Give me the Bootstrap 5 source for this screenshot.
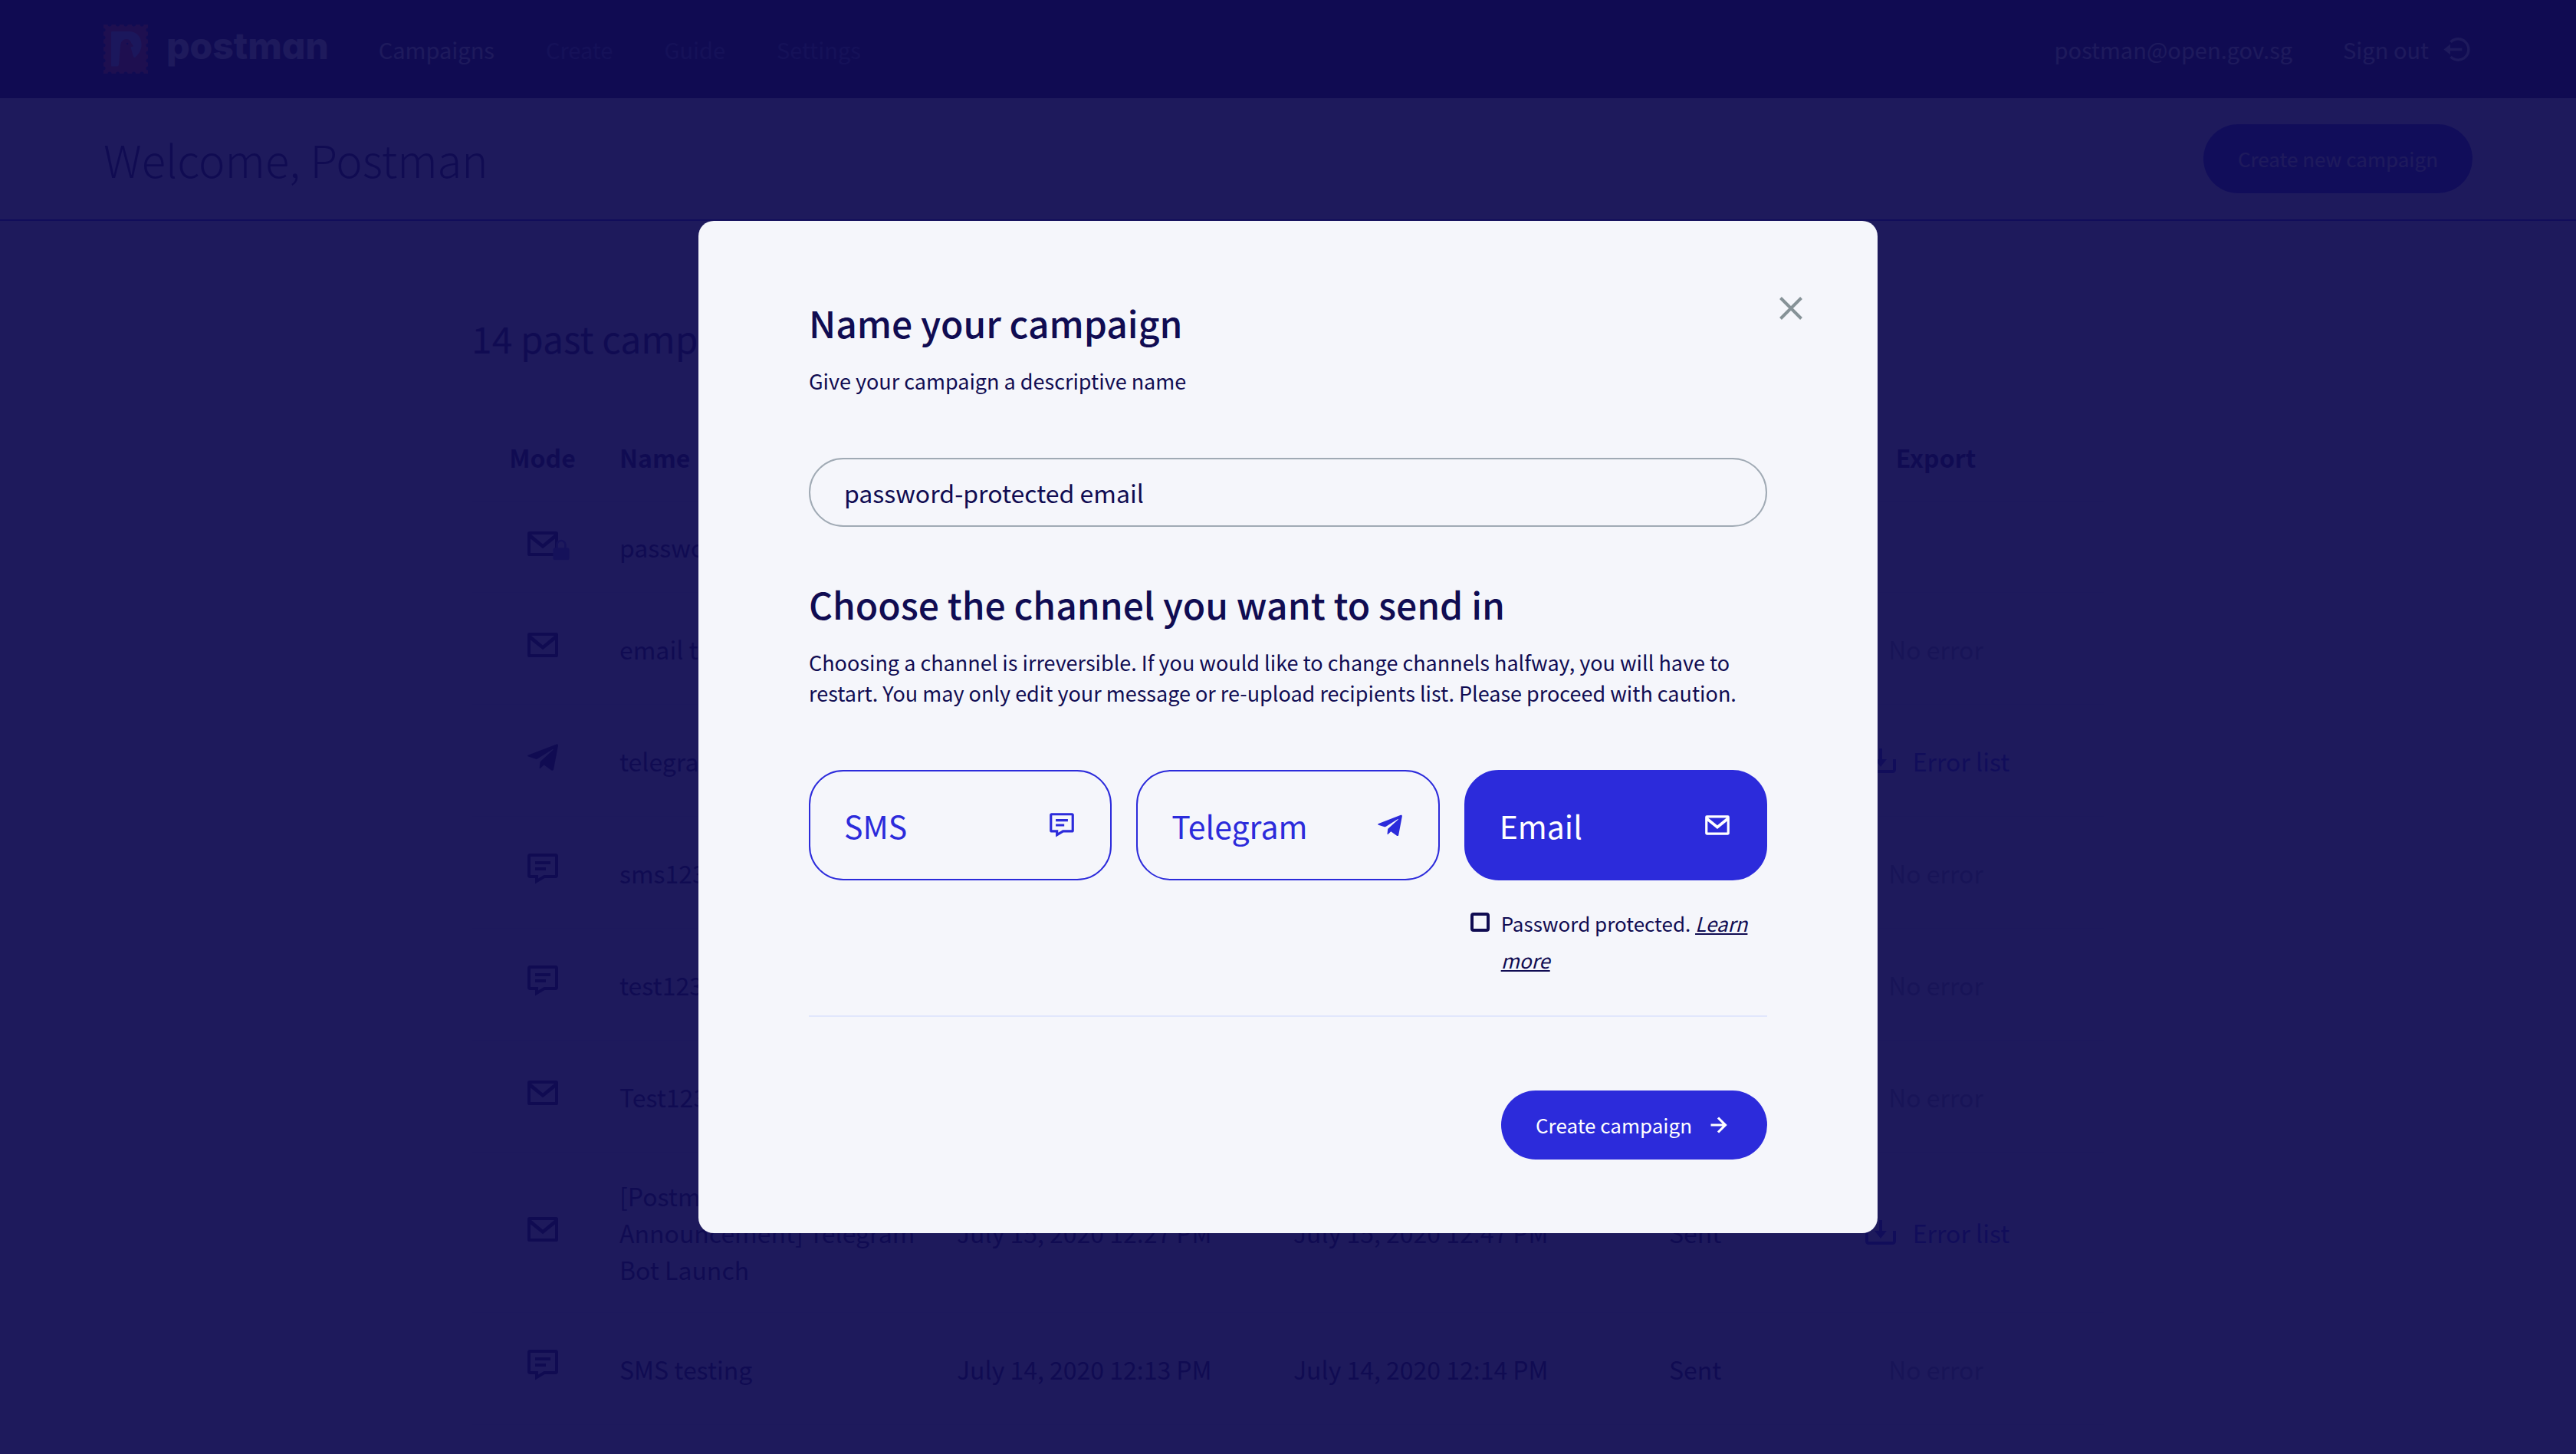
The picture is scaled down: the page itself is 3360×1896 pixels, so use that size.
<!DOCTYPE html>
<html lang="en">
<head>
<meta charset="utf-8">
<meta name="viewport" content="width=device-width, initial-scale=1">
<title>Postman - Campaigns</title>
<link href="https://cdn.jsdelivr.net/npm/bootstrap@5.3.0/dist/css/bootstrap.min.css" rel="stylesheet">
<style>
:root{--ink:#100c52;--brand:#2c2bdb;--paper:#f5f6fb;--rule:#e1e7fc}
body{font-family:"Noto Sans CJK SC","Noto Sans",sans-serif;font-size:32px;line-height:48px;color:var(--ink);background:var(--paper)}
svg{fill:currentColor;flex:none}
.gutter{padding-left:135px;padding-right:135px}
/* top bar */
.topbar{height:128px;background:var(--ink);color:var(--paper);font-size:29px}
.topbar a,.topbar button{color:inherit;text-decoration:none}
.topbar .nav{gap:67px;margin-left:65px}
.topbar .nav .muted-link{color:#6a62b8}
.wordmark{font:800 48px/56px Inter,sans-serif;font-feature-settings:"cv11";padding-bottom:8px;margin-left:24px}
.signout{gap:16px;margin-left:66px;padding:0;border:0;background:none}
/* page header */
.page-head{padding-top:34px;padding-bottom:34px;border-bottom:2px solid var(--brand)}
.page-head h1{font-size:58px;font-weight:300;line-height:80px;margin:0}
.btn-pill{height:90px;border-radius:45px;background:var(--brand);color:#fff;font-size:26px;line-height:40px;padding:0 45px;border:0}
/* campaigns table */
.listing{max-width:2130px;padding-top:117px}
.listing h2{font-size:48px;font-weight:400;line-height:70px;margin:0 0 64px}
.campaigns{table-layout:fixed;margin:0;color:var(--ink);--bs-table-bg:transparent;--bs-table-color:var(--ink)}
.campaigns th{padding:33px 8px;font-weight:700;border-bottom:1px solid var(--rule)}
.campaigns td{padding:32px 8px;vertical-align:middle;border-bottom:1px solid var(--rule)}
.campaigns .c-mode{width:185px}
.campaigns .c-name,.campaigns .c-export{width:440px}
.campaigns .c-date{width:439px}
.campaigns .c-sent{width:490px}
.mode-icon{height:54px;padding-bottom:9px}
.export-cell{height:81px}
.export-cell a{gap:18px;color:var(--brand);text-decoration:none}
.no-error{color:#9299a8}
.lock{left:32px;top:16px;color:#6b67d6}
/* dialog */
.modal-backdrop{--bs-backdrop-bg:#100c52;--bs-backdrop-opacity:.94}
.modal-dialog{max-width:1538px}
.modal-content{background:var(--paper);color:var(--ink);border:0;border-radius:20px;padding:97px 144px 96px}
.modal-content h2,.modal-content .h2{font-size:48px;font-weight:500;line-height:70px;margin:0 0 22px;display:block}
.hint{font-size:27px;line-height:40px;margin:0 0 80px}
.name-box{height:90px;border:2px solid #a0aab4;border-radius:45px;background:transparent;color:var(--ink);font-size:32px;padding:0 44px;margin-bottom:65px}
.channels{display:grid;grid-template-columns:repeat(3,minmax(0,1fr));gap:32px}
.channel{height:144px;border:2px solid var(--brand);border-radius:45px;color:var(--brand);font-size:41px;line-height:60px;padding:0 44px}
.channel.active{background:var(--brand);color:#fff}
.protect{grid-column:3;gap:15px;padding-left:8px;font-size:26px;line-height:48px}
.protect input{appearance:none;flex:none;width:25px;height:25px;border:4px solid var(--ink);border-radius:4px;margin:10px 0 0;background:transparent}
.protect a{color:inherit;font-style:italic}
.divider{border:0;border-top:2px solid var(--rule);opacity:1;margin:48px 0 96px}
.close-x{top:90px;right:89px;width:48px;height:48px;padding:0;border:0;background:none;color:#869297;line-height:0}
.create{gap:15px}
</style>
</head>
<body class="vh-100 overflow-hidden">
<svg class="d-none" aria-hidden="true">
  <symbol id="mail" viewBox="0 0 24 24"><path fill-rule="evenodd" d="M3.3 4h17.4A1.3 1.3 0 0 1 22 5.300v13.400a1.300 1.300 0 0 1-1.300 1.300H3.300A1.300 1.300 0 0 1 2 18.700V5.300A1.300 1.300 0 0 1 3.300 4zM4.500 6L12 12.200 19.500 6zM4 8.700V18h16V8.700l-8 6.400z"/></symbol>
  <symbol id="sms" viewBox="0 0 24 24"><path d="M7 7h10v2H7zm0 4h7v2H7z"/><path d="M20.500 2h-17C2.700 2 2 2.700 2 3.500v13c0 .8.700 1.500 1.500 1.500H7v3.767L13.277 18H20.500c.8 0 1.500-.7 1.500-1.500v-13c0-.8-.7-1.500-1.500-1.500zM20 16h-7.277L9 18.233V16H4V4h16v12z"/></symbol>
  <symbol id="telegram" viewBox="0 0 24 24"><path d="M20.900 3.700L2.600 10.800c-.8.300-.8.800-.1 1l5 1.600c.4.100.7 0 1-.2l9.800-6.100c.4-.2.700 0 .4.300l-8.200 7.500c-.2.200-.3.400-.3.600l-.4 3.700c0 .4.400.5.700.2l2.300-2.200 4.800 3.500c.7.400 1.300.2 1.500-.7L22 4.700c.1-.8-.4-1.200-1.100-1z"/></symbol>
  <symbol id="download" viewBox="0 0 24 24"><path d="M12 16l4-5h-3V4h-2v7H8z"/><path d="M20 18H4v-7H2v7c0 1.103.897 2 2 2h16c1.103 0 2-.897 2-2v-7h-2v7z"/></symbol>
  <symbol id="lock" viewBox="0 0 24 24"><path d="M20 12c0-1.103-.897-2-2-2h-1V7c0-2.757-2.243-5-5-5S7 4.243 7 7v3H6c-1.103 0-2 .897-2 2v8c0 1.103.897 2 2 2h12c1.103 0 2-.897 2-2v-8zM9 7c0-1.654 1.346-3 3-3s3 1.346 3 3v3H9V7z"/></symbol>
</svg>

<header class="topbar gutter d-flex align-items-center">
  <a href="#" class="d-flex align-items-center">
    <svg width="58" height="64" viewBox="0 0 58 64">
      <path fill="#f0413f" d="M0 0h58v64H0z"/>
      <path fill="none" stroke="#100c52" stroke-width="5" stroke-linecap="round" d="M8 0h.01M18.500 0h.01M29 0h.01M39.500 0h.01M50 0h.01M8 64h.01M18.500 64h.01M29 64h.01M39.500 64h.01M50 64h.01M0 7h.01M0 17h.01M0 27h.01M0 37h.01M0 47h.01M0 57h.01M58 7h.01M58 17h.01M58 27h.01M58 37h.01M58 47h.01M58 57h.01"/>
      <path fill="#c9cdf5" d="M11.500 9H33c10 0 16.500 7 16.500 17 0 7-3 12-8 16.500-1 .6-1.800.4-2.300-.6-1.600-3.800-2.300-8-3.700-12.600l3.500-.9c-.6-1.800-1.600-3-2.700-4-.7-3.400-3-5.400-6.800-5.400-4.500 0-7 3.500-7.500 9L20 52c-.2 1.600-1.200 2.600-3 2.600h-5.500c-1 0-1.500-.6-1.500-1.600V10.500c0-1 .5-1.500 1.500-1.500z"/>
      <circle cx="31" cy="25" r="1.300" fill="#100c52"/>
    </svg>
    <span class="wordmark">postman</span>
  </a>
  <nav class="nav flex-nowrap">
    <a href="#">Campaigns</a>
    <a href="#" class="muted-link">Create</a>
    <a href="#" class="muted-link">Guide</a>
    <a href="#" class="muted-link">Settings</a>
  </nav>
  <span class="ms-auto">postman@open.gov.sg</span>
  <button type="button" class="signout d-flex align-items-center">Sign out
    <svg width="41" height="41" viewBox="0 0 24 24"><path d="M2 12l5 4v-3h9v-2H7V8z"/><path d="M13.001 2.999a8.938 8.938 0 0 0-6.364 2.637L8.051 7.050c1.322-1.322 3.080-2.051 4.950-2.051s3.628.729 4.950 2.051 2.051 3.080 2.051 4.950-.729 3.628-2.051 4.950-3.080 2.051-4.950 2.051-3.628-.729-4.950-2.051l-1.414 1.414c1.699 1.700 3.959 2.637 6.364 2.637s4.665-.937 6.364-2.637c1.700-1.699 2.637-3.959 2.637-6.364s-.937-4.665-2.637-6.364a8.938 8.938 0 0 0-6.364-2.637z"/></svg>
  </button>
</header>

<section class="page-head gutter d-flex align-items-center justify-content-between">
  <h1>Welcome, Postman</h1>
  <button type="button" class="btn-pill">Create new campaign</button>
</section>

<main class="listing mx-auto">
  <h2>14 past campaigns</h2>
  <table class="table campaigns">
    <colgroup><col class="c-mode"><col class="c-name"><col class="c-date"><col class="c-sent"><col><col class="c-export"></colgroup>
    <thead><tr><th class="text-center">Mode</th><th>Name</th><th>Created</th><th>Sent</th><th>Status</th><th class="text-center">Export</th></tr></thead>
    <tbody>
      <tr><td><div class="mode-icon d-flex align-items-center justify-content-center"><span class="position-relative d-flex"><svg width="48" height="48"><use href="#mail"/></svg><svg class="lock position-absolute" width="32" height="32"><use href="#lock"/></svg></span></div></td><td>password</td><td></td><td></td><td></td><td></td></tr>
      <tr><td><div class="mode-icon d-flex align-items-center justify-content-center"><svg width="48" height="48"><use href="#mail"/></svg></div></td><td>email test</td><td></td><td></td><td></td><td><div class="export-cell d-flex align-items-center justify-content-center no-error">No error</div></td></tr>
      <tr><td><div class="mode-icon d-flex align-items-center justify-content-center"><svg width="48" height="48"><use href="#telegram"/></svg></div></td><td>telegram</td><td></td><td></td><td></td><td><div class="export-cell d-flex align-items-center justify-content-center"><a href="#" class="d-flex align-items-center"><svg width="48" height="48"><use href="#download"/></svg>Error list</a></div></td></tr>
      <tr><td><div class="mode-icon d-flex align-items-center justify-content-center"><svg width="48" height="48"><use href="#sms"/></svg></div></td><td>sms123</td><td></td><td></td><td></td><td><div class="export-cell d-flex align-items-center justify-content-center no-error">No error</div></td></tr>
      <tr><td><div class="mode-icon d-flex align-items-center justify-content-center"><svg width="48" height="48"><use href="#sms"/></svg></div></td><td>test123</td><td></td><td></td><td></td><td><div class="export-cell d-flex align-items-center justify-content-center no-error">No error</div></td></tr>
      <tr><td><div class="mode-icon d-flex align-items-center justify-content-center"><svg width="48" height="48"><use href="#mail"/></svg></div></td><td>Test123</td><td></td><td></td><td></td><td><div class="export-cell d-flex align-items-center justify-content-center no-error">No error</div></td></tr>
      <tr><td><div class="mode-icon d-flex align-items-center justify-content-center"><svg width="48" height="48"><use href="#mail"/></svg></div></td><td>[Postman Feature Announcement] Telegram Bot Launch</td><td>July 15, 2020 12:27 PM</td><td>July 15, 2020 12:47 PM</td><td>Sent</td><td><div class="export-cell d-flex align-items-center justify-content-center"><a href="#" class="d-flex align-items-center"><svg width="48" height="48"><use href="#download"/></svg>Error list</a></div></td></tr>
      <tr><td><div class="mode-icon d-flex align-items-center justify-content-center"><svg width="48" height="48"><use href="#sms"/></svg></div></td><td>SMS testing</td><td>July 14, 2020 12:13 PM</td><td>July 14, 2020 12:14 PM</td><td>Sent</td><td><div class="export-cell d-flex align-items-center justify-content-center no-error">No error</div></td></tr>
    </tbody>
  </table>
</main>

<div class="modal-backdrop show"></div>
<div class="modal show d-block" tabindex="-1" role="dialog" aria-modal="true" aria-labelledby="nameTitle">
  <div class="modal-dialog modal-dialog-centered my-0 min-vh-100">
    <form class="modal-content">
      <button type="button" class="close-x position-absolute" aria-label="Close"><svg width="48" height="48" viewBox="0 0 48 48"><path d="M10.500 10.500l27 27M37.500 10.500l-27 27" stroke="currentColor" stroke-width="4" fill="none"/></svg></button>
      <label class="h2" id="nameTitle" for="campaignName">Name your campaign</label>
      <p class="hint">Give your campaign a descriptive name</p>
      <input id="campaignName" class="name-box w-100" type="text" value="password-protected email">
      <h2>Choose the channel you want to send in</h2>
      <p class="hint">Choosing a channel is irreversible. If you would like to change channels halfway, you will have to restart. You may only edit your message or re-upload recipients list. Please proceed with caution.</p>
      <div class="channels">
        <button type="button" class="channel bg-transparent d-flex align-items-center justify-content-between">SMS<svg width="38" height="38"><use href="#sms"/></svg></button>
        <button type="button" class="channel bg-transparent d-flex align-items-center justify-content-between">Telegram<svg width="38" height="38"><use href="#telegram"/></svg></button>
        <button type="button" class="channel active d-flex align-items-center justify-content-between">Email<svg width="38" height="38"><use href="#mail"/></svg></button>
        <div class="protect d-flex align-items-start">
          <input type="checkbox" id="protect">
          <label for="protect">Password protected. <a href="#">Learn more</a></label>
        </div>
      </div>
      <hr class="divider">
      <div class="d-flex justify-content-end">
        <button type="submit" class="btn-pill create d-flex align-items-center">Create campaign<svg width="38" height="38" viewBox="0 0 24 24"><path d="m11.293 17.293 1.414 1.414L19.414 12l-6.707-6.707-1.414 1.414L15.586 11H6v2h9.586z"/></svg></button>
      </div>
    </form>
  </div>
</div>
<script src="https://cdn.jsdelivr.net/npm/bootstrap@5.3.0/dist/js/bootstrap.bundle.min.js"></script>
</body>
</html>
